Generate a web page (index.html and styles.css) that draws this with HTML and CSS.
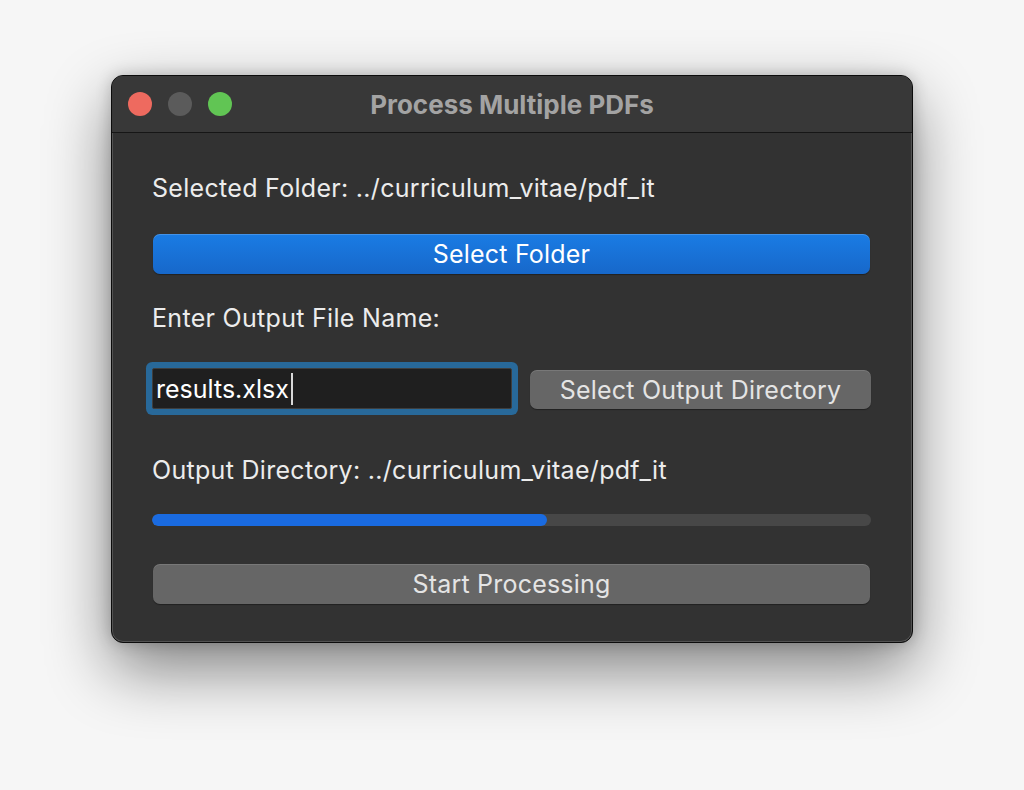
FILE: index.html
```html
<!DOCTYPE html>
<html lang="en">
<head>
<meta charset="utf-8">
<title>Process Multiple PDFs</title>
<link rel="stylesheet" href="styles.css">
</head>
<body>
<div class="stage">
  <div class="window">
    <div class="titlebar">
      <div class="lights">
        <span class="light red"></span>
        <span class="light gray"></span>
        <span class="light green"></span>
      </div>
      <div class="title">Process Multiple PDFs</div>
    </div>
    <div class="content">
      <div class="label l1">Selected Folder: ../curriculum_vitae/pdf_it</div>
      <div class="btn primary b1">Select Folder</div>
      <div class="label l2">Enter Output File Name:</div>
      <div class="row">
        <div class="field"><span class="value">results.xlsx</span><span class="caret"></span></div>
        <div class="btn secondary dirbtn">Select Output Directory</div>
      </div>
      <div class="label l3">Output Directory: ../curriculum_vitae/pdf_it</div>
      <div class="progress"><div class="bar" style="width:55%"></div></div>
      <div class="btn secondary start">Start Processing</div>
    </div>
  </div>
</div>
</body>
</html>
```

FILE: styles.css
```css
* { box-sizing: border-box; }
html, body { margin: 0; padding: 0; }
body {
  width: 1024px;
  height: 790px;
  background: #f6f6f6;
  font-family: Inter, "Noto Sans", "Liberation Sans", sans-serif;
  overflow: hidden;
}
.stage {
  padding: 75px 0 0 111px;
}
.window {
  width: 802px;
  height: 568px;
  border-radius: 12px;
  background: #323232;
  border: 1px solid #0c0c0c;
  box-shadow: inset 0 0 0 1px rgba(255,255,255,0.16), 0 26px 64px rgba(0,0,0,0.48), 0 0 16px rgba(0,0,0,0.2);
  overflow: hidden;
  display: flex;
  flex-direction: column;
}
.titlebar {
  height: 57px;
  background: #383838;
  border-bottom: 1px solid #161616;
  display: flex;
  align-items: center;
  position: relative;
  flex-shrink: 0;
}
.lights {
  display: flex;
  gap: 16px;
  padding-left: 16px;
}
.light {
  width: 24px;
  height: 24px;
  border-radius: 50%;
  display: block;
}
.light.red { background: #ee6a5f; }
.light.gray { background: #5b5b5b; }
.light.green { background: #61c554; }
.title {
  position: absolute;
  left: 0;
  right: 0;
  top: 0;
  bottom: 0;
  display: flex;
  align-items: center;
  justify-content: center;
  color: #a3a3a3;
  font-weight: 700;
  font-size: 26px;
  pointer-events: none;
}
.content {
  padding: 40px 41px 0 40px;
  display: flex;
  flex-direction: column;
  color: #ececec;
}
.label {
  height: 30px;
  line-height: 30px;
  font-size: 25px;
  letter-spacing: 0.3px;
  white-space: nowrap;
}
.btn {
  height: 40px;
  border-radius: 7px;
  display: flex;
  align-items: center;
  justify-content: center;
  font-size: 25px;
  letter-spacing: 0.2px;
  white-space: nowrap;
}
.primary {
  background: linear-gradient(#1a7ce4, #1768ca);
  color: #ffffff;
  box-shadow: inset 0 1px 0 rgba(255,255,255,0.18), 0 1px 1px rgba(0,0,0,0.35);
}
.secondary {
  background: #666666;
  color: #e4e4e4;
  box-shadow: inset 0 1px 0 rgba(255,255,255,0.12), 0 1px 1px rgba(0,0,0,0.35);
}
.b1 { margin: 31px 1px 0 1px; }
.l2 { margin-top: 29px; }
.row {
  margin-top: 35px;
  display: flex;
  align-items: flex-end;
  gap: 18px;
}
.field {
  width: 360px;
  height: 41px;
  background: #1f1f1f;
  border: 1px solid #3e3e3e;
  border-radius: 2px;
  box-shadow: 0 0 0 6px #28699a;
  display: flex;
  align-items: center;
  padding-left: 3px;
  color: #ffffff;
  font-size: 25px;
  flex-shrink: 0;
}
.caret {
  width: 2px;
  height: 32px;
  background: #d8d8d8;
  margin-left: 2px;
}
.dirbtn {
  flex: 1;
  height: 39px;
}
.l3 { margin-top: 46px; }
.progress {
  margin-top: 29px;
  height: 12px;
  border-radius: 6px;
  background: #474747;
  overflow: hidden;
}
.bar {
  height: 100%;
  border-radius: 6px;
  background: #1a6be1;
}
.start {
  margin: 38px 1px 0 1px;
}
```
